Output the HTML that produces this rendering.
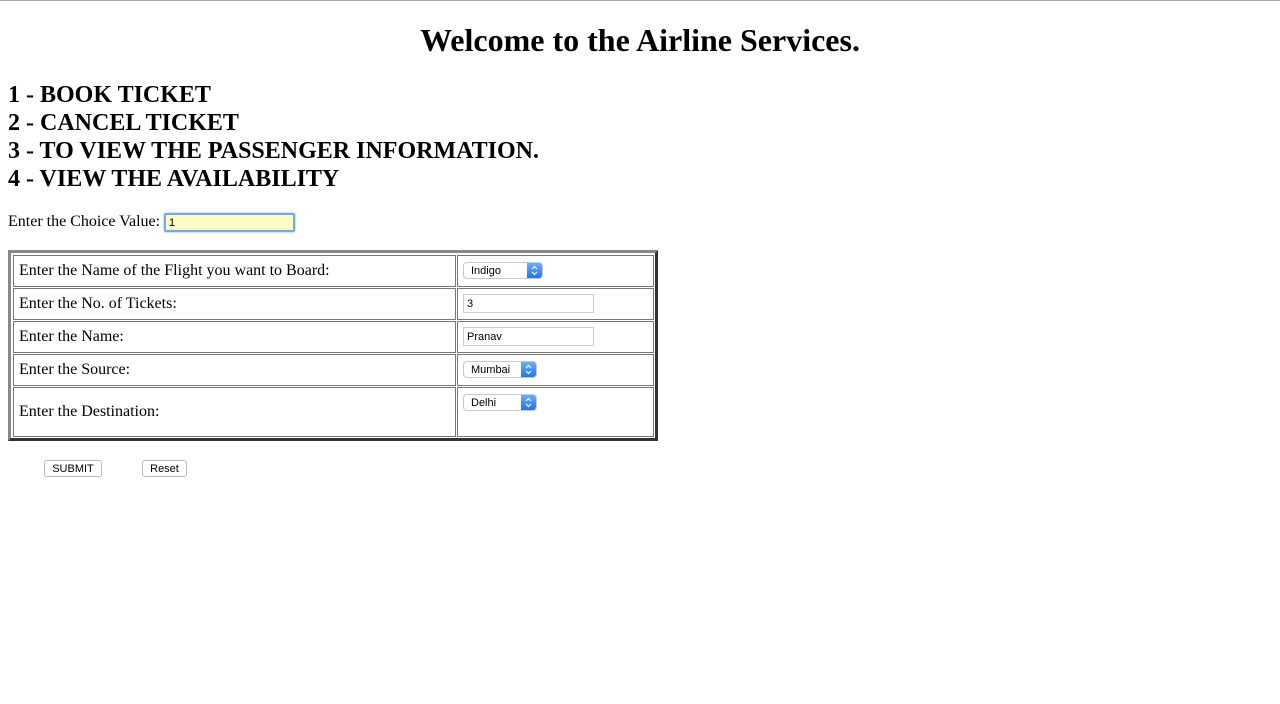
<!DOCTYPE html>
<html><head><style>
body{margin:0;width:1280px;height:704px;background:#fff;font-family:"Liberation Serif",serif;color:#000;position:relative;overflow:hidden}
.a{position:absolute;white-space:nowrap}
.h1{font-size:32px;font-weight:bold;left:0;width:1280px;text-align:center;top:20px;line-height:40px}
.m{font-size:24px;font-weight:bold;left:8px;line-height:28px}
.c{position:absolute;border:1px solid #777;box-sizing:border-box}
.t{position:absolute;font-size:16px;left:19px}
.sel{position:absolute;height:17px;border:1px solid #c8c8c8;border-radius:4px;background:#fff;font-family:"Liberation Sans",sans-serif;font-size:11px;box-sizing:border-box;padding-left:7px;line-height:16px;overflow:hidden}
.sel i{position:absolute;right:0;top:-1px;width:15px;height:17px;background:linear-gradient(#6fb0ff,#1a73ef);border-radius:0 4px 4px 0}
.sel i svg{position:absolute;left:4px;top:3px}
.inp{position:absolute;height:19px;border:1px solid #ccc;box-sizing:border-box;font-family:"Liberation Sans",sans-serif;font-size:11px;padding-left:3px;line-height:19px}
.btn{position:absolute;height:17px;top:460px;border:1px solid #bbb;border-radius:3px;background:#fff;font-family:"Liberation Sans",sans-serif;font-size:11px;text-align:center;line-height:17px;box-sizing:border-box}
</style></head><body>
<div class="a" style="left:0;top:0;width:1280px;height:1px;background:#aaa"></div>
<div class="a h1">Welcome to the Airline Services.</div>
<div class="a m" style="top:81px">1 - BOOK TICKET</div>
<div class="a m" style="top:109px">2 - CANCEL TICKET</div>
<div class="a m" style="top:137px">3 - TO VIEW THE PASSENGER INFORMATION.</div>
<div class="a m" style="top:165px">4 - VIEW THE AVAILABILITY</div>
<div class="a" style="left:8px;top:213px;font-size:16px">Enter the Choice Value:</div>
<div class="a" style="left:164px;top:213px;width:131px;height:19px;background:#fafbc5;border:2px solid #7aa7e8;box-sizing:border-box;border-radius:2px;box-shadow:0 0 2px #7aa7e8;font-family:'Liberation Sans',sans-serif;font-size:11px;line-height:17px;padding-left:3px">1</div>
<div class="a" style="left:8px;top:250px;width:650px;height:191px;box-sizing:border-box;border:3px solid;border-color:#888 #333 #333 #888"></div>
<div class="c" style="left:13px;top:255px;width:443px;height:32px"></div><div class="c" style="left:457px;top:255px;width:197px;height:32px"></div>
<div class="c" style="left:13px;top:288px;width:443px;height:32px"></div><div class="c" style="left:457px;top:288px;width:197px;height:32px"></div>
<div class="c" style="left:13px;top:321px;width:443px;height:32px"></div><div class="c" style="left:457px;top:321px;width:197px;height:32px"></div>
<div class="c" style="left:13px;top:354px;width:443px;height:32px"></div><div class="c" style="left:457px;top:354px;width:197px;height:32px"></div>
<div class="c" style="left:13px;top:387px;width:443px;height:50px"></div><div class="c" style="left:457px;top:387px;width:197px;height:50px"></div>
<div class="t a" style="top:262px">Enter the Name of the Flight you want to Board:</div>
<div class="t a" style="top:295px">Enter the No. of Tickets:</div>
<div class="t a" style="top:328px">Enter the Name:</div>
<div class="t a" style="top:361px">Enter the Source:</div>
<div class="t a" style="top:403px">Enter the Destination:</div>
<div class="sel" style="left:463px;top:262px;width:80px">Indigo<i><svg width="7" height="11"><path d="M1 4L3.5 1.5L6 4M1 7L3.5 9.5L6 7" stroke="#fff" fill="none" stroke-width="1.2"/></svg></i></div>
<div class="inp" style="left:463px;top:294px;width:131px">3</div>
<div class="inp" style="left:463px;top:327px;width:131px">Pranav</div>
<div class="sel" style="left:463px;top:361px;width:74px">Mumbai<i><svg width="7" height="11"><path d="M1 4L3.5 1.5L6 4M1 7L3.5 9.5L6 7" stroke="#fff" fill="none" stroke-width="1.2"/></svg></i></div>
<div class="sel" style="left:463px;top:394px;width:74px">Delhi<i><svg width="7" height="11"><path d="M1 4L3.5 1.5L6 4M1 7L3.5 9.5L6 7" stroke="#fff" fill="none" stroke-width="1.2"/></svg></i></div>
<div class="btn" style="left:44px;width:58px">SUBMIT</div>
<div class="btn" style="left:142px;width:45px">Reset</div>
</body></html>
